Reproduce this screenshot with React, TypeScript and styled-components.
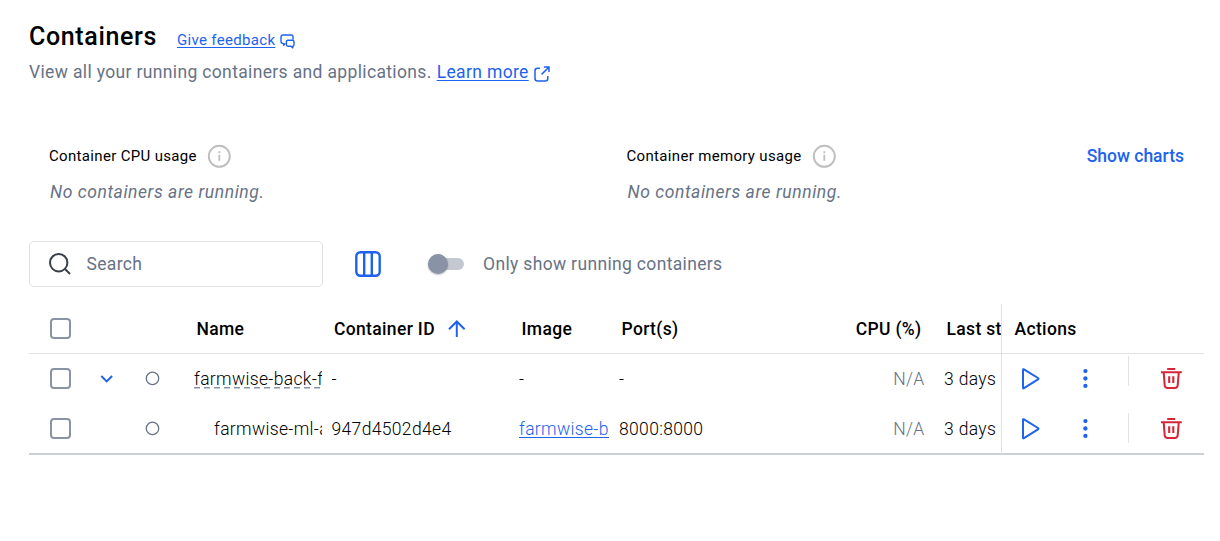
import React from "react";
import styled, { createGlobalStyle, css } from "styled-components";

const blue = "#1d63ed";
const slate = "#677285";
const steel = "#8993a5";
const line = "#e1e2e6";

const GlobalStyle = createGlobalStyle`
  * { box-sizing: border-box; }
  body { margin: 0; background: #fff; color: #000; font-family: Roboto, "Liberation Sans", sans-serif; font-size: 17.5px; }
  svg { display: block; flex: none; }
`;

const Page = styled.main`
  width: 1220px;
  height: 541px;
  padding: 18px 16px 0 29px;
  overflow: hidden;
  white-space: nowrap;
  letter-spacing: 0.34px;
`;

const TitleRow = styled.header`
  display: flex;
  align-items: center;
  height: 36px;
`;

const Title = styled.h1`
  margin: 0;
  width: 148px;
  padding-top: 1px;
  font-size: 25px;
  font-weight: 500;
  letter-spacing: 0.65px;
  line-height: 36px;
`;

const Link = styled.a<{ $small?: boolean }>`
  color: ${blue};
  text-decoration: underline;
  text-underline-offset: 2px;
  text-decoration-thickness: 1px;
  ${(p) => p.$small && css`
    font-size: 15px;
    line-height: 20px;
    margin: 7px 5px 0 0;
    letter-spacing: 0.32px;
  `}
`;

const FeedbackIcon = styled.svg`
  margin-top: 10px;
`;

const Subtitle = styled.p`
  display: flex;
  align-items: center;
  margin: 6px 0 0;
  height: 24px;
  color: ${slate};
  letter-spacing: 0.35px;
  gap: 5px;
`;

const ExternalIcon = styled.svg`
  margin-top: 3px;
`;

const Usage = styled.section`
  display: grid;
  grid-template-columns: 577.5px 1fr auto;
  padding: 0 20px;
  margin-top: 60px;
`;

const UsageLabel = styled.div`
  display: flex;
  align-items: center;
  gap: 10px;
  height: 24px;
  font-size: 15px;
  letter-spacing: 0.33px;
`;

const UsageText = styled.div`
  margin: 12px 0 0 1px;
  line-height: 24px;
  color: ${slate};
  font-style: italic;
  letter-spacing: 0.57px;
`;

const ChartsButton = styled.button`
  height: 24px;
  padding: 0;
  border: 0;
  background: none;
  color: ${blue};
  font: 500 17.5px/24px Roboto, sans-serif;
`;

const Toolbar = styled.div`
  display: flex;
  align-items: center;
  height: 46px;
  margin-top: 37px;
`;

const SearchBox = styled.div`
  display: flex;
  align-items: center;
  gap: 15.5px;
  width: 294px;
  height: 46px;
  padding-left: 19px;
  border: 1px solid ${line};
  border-radius: 5px;
  color: ${slate};
`;

const ColumnsButton = styled.div`
  margin-left: 32px;
`;

const Switch = styled.div`
  display: flex;
  align-items: center;
  width: 36px;
  height: 12px;
  margin: 0 19px 0 47px;
  border-radius: 6px;
  background: #c4c8d1;
`;

const Knob = styled.span`
  width: 20px;
  height: 20px;
  flex: none;
  border-radius: 50%;
  background: ${steel};
  box-shadow: 0 1px 2px rgba(0, 0, 0, 0.25);
`;

const SwitchLabel = styled.span`
  color: ${slate};
`;

const Table = styled.div`
  margin-top: 17px;
  border-bottom: 2px solid #cdcfd6;
`;

const Row = styled.div<{ $head?: boolean }>`
  display: grid;
  grid-template-columns: 57px 43px 65px 137.5px 187.5px 100px 236px 89px 57px 203px;
  align-items: center;
  height: 50px;
  padding-bottom: ${(p) => (p.$head ? 0 : 1)}px;
  border-bottom: ${(p) => (p.$head ? `1px solid ${line}` : "0")};
  font-weight: ${(p) => (p.$head ? 500 : 300)};
  &:last-child { height: 49px; padding-bottom: 0; }
`;

const Cell = styled.div<{ $indent?: number; $right?: number; $end?: boolean; $muted?: boolean }>`
  min-width: 0;
  overflow: hidden;
  line-height: 26px;
  margin-left: ${(p) => p.$indent ?? 0}px;
  margin-right: ${(p) => p.$right ?? 9.5}px;
  text-align: ${(p) => (p.$end ? "right" : "left")};
  color: ${(p) => (p.$muted ? slate : "inherit")};
`;

const Group = styled.span`
  display: block;
  padding-top: 2px;
  line-height: 19px;
  background: repeating-linear-gradient(90deg, ${steel} 0 6px, transparent 6px 10px) 0 18.5px / 100% 1.5px no-repeat;
`;

const HeadLabel = styled.span`
  display: flex;
  align-items: center;
  gap: 13.5px;
`;

const Check = styled.span`
  display: block;
  width: 21px;
  height: 21px;
  margin-left: 21px;
  border: 2px solid ${steel};
  border-radius: 4px;
`;

const ExpandIcon = styled.svg`
  margin-left: 13.5px;
`;

const StatusIcon = styled.svg`
  margin-left: 16px;
`;

const Actions = styled.div<{ $head?: boolean }>`
  display: flex;
  align-items: center;
  align-self: stretch;
  margin-bottom: ${(p) => (p.$head ? 0 : -1)}px;
  padding-left: ${(p) => (p.$head ? 12.5 : 19)}px;
  padding-bottom: ${(p) => (p.$head ? 0 : 1)}px;
  border-left: 1px solid ${line};
`;

const Divider = styled.span<{ $shift: number }>`
  width: 1px;
  height: 30px;
  margin: ${(p) => p.$shift}px 31px 0 40px;
  background: ${line};
`;

const DotsIcon = styled.svg`
  margin-left: 41px;
`;

const Info = () => (
  <svg width="24" height="24" viewBox="0 0 24 24" fill="none" stroke="#bfbfbf">
    <circle cx="12.3" cy="12.3" r="10.5" strokeWidth="2" />
    <path d="M12.3 10.8v6M12.3 7.3v2" strokeWidth="1.8" />
  </svg>
);

const Status = () => (
  <StatusIcon width="15" height="15" viewBox="0 0 15 15" fill="none" stroke={slate} strokeWidth="1.3">
    <circle cx="7.5" cy="7.4" r="6.2" />
  </StatusIcon>
);

const Play = () => (
  <svg width="20" height="24" viewBox="0 0 20 24" fill="none" stroke={blue} strokeWidth="2" strokeLinejoin="round">
    <path d="M2 2.9Q2 1.8 3 2.4L17 11Q18 11.7 17 12.4L3 21.2Q2 21.8 2 20.7Z" />
  </svg>
);

const Dots = () => (
  <DotsIcon width="6" height="22" viewBox="0 0 6 22" fill={blue}>
    <circle cx="3.4" cy="3.1" r="2.15" />
    <circle cx="3.4" cy="10.5" r="2.15" />
    <circle cx="3.4" cy="17.9" r="2.15" />
  </DotsIcon>
);

const Trash = () => (
  <svg width="23" height="23" viewBox="0 0 23 23" fill="none" stroke="#d52536" strokeWidth="2">
    <path d="M7.2 2h8M1 5.2h20.8M3.7 5.2l1 13.2Q5 21 7.6 21h7.2q2.6 0 2.9-2.6l1.1-13.2" />
    <path d="M9.2 9.3v6.8M13.3 9.3v6.8" strokeWidth="2.1" />
  </svg>
);

const RowActions = ({ shift }: { shift: number }) => (
  <Actions>
    <Play />
    <Dots />
    <Divider $shift={shift} />
    <Trash />
  </Actions>
);

export default function App() {
  return (
    <Page>
      <GlobalStyle />
      <TitleRow>
        <Title>Containers</Title>
        <Link $small>Give feedback</Link>
        <FeedbackIcon width="15" height="15" viewBox="0 0 15 15" fill="none" stroke={blue} strokeWidth="1.4" strokeLinejoin="round">
          <path d="M5.6 9.6H5L3.6 11.2V9.6Q1 9.4 1 7.4V3Q1 1 3 1h8q2 0 2 2v2.8" />
          <path d="M8 6.2h4.4q1.6 0 1.6 1.6v2.6q0 1.5-1.2 1.7v1.8L11 12.2H8q-1.6 0-1.6-1.6V7.8Q6.4 6.2 8 6.2Z" />
        </FeedbackIcon>
      </TitleRow>
      <Subtitle>
        <span>View all your running containers and applications.</span>
        <Link>Learn more</Link>
        <ExternalIcon width="16" height="16" viewBox="0 0 16 16" fill="none" stroke={blue} strokeWidth="1.5">
          <path d="M6 2.2H3.5Q1 2.2 1 4.7v7.8Q1 15 3.5 15h7.8q2.5 0 2.5-2.5V10" />
          <path d="M7.6 8.4L14.8 1.2M10 1h5v5" />
        </ExternalIcon>
      </Subtitle>

      <Usage>
        <div>
          <UsageLabel>Container CPU usage <Info /></UsageLabel>
          <UsageText>No containers are running.</UsageText>
        </div>
        <div>
          <UsageLabel>Container memory usage <Info /></UsageLabel>
          <UsageText>No containers are running.</UsageText>
        </div>
        <ChartsButton>Show charts</ChartsButton>
      </Usage>

      <Toolbar>
        <SearchBox>
          <svg width="22" height="22" viewBox="0 0 22 22" fill="none" stroke="#393f49" strokeWidth="2">
            <circle cx="9.7" cy="9.7" r="8.7" />
            <path d="M16 16l5 5" />
          </svg>
          Search
        </SearchBox>
        <ColumnsButton>
          <svg width="26" height="26" viewBox="0 0 26 26" fill="none" stroke={blue} strokeWidth="2.4">
            <rect x="1.3" y="1.3" width="23.4" height="23.4" rx="4" />
            <path d="M9.2 1v24M16.8 1v24" />
          </svg>
        </ColumnsButton>
        <Switch><Knob /></Switch>
        <SwitchLabel>Only show running containers</SwitchLabel>
      </Toolbar>

      <Table>
        <Row $head>
          <Check />
          <span />
          <span />
          <Cell $indent={2.5}>Name</Cell>
          <Cell $indent={2.5}>
            <HeadLabel>
              Container ID
              <svg width="18" height="18" viewBox="0 0 18 18" fill="none" stroke={blue} strokeWidth="2">
                <path d="M8.8 17V2M1 9.3L8.8 1.5l7.8 7.8" />
              </svg>
            </HeadLabel>
          </Cell>
          <Cell $indent={2.5}>Image</Cell>
          <Cell $indent={2.5}>Port(s)</Cell>
          <Cell $end $right={22.5}>CPU (%)</Cell>
          <Cell $indent={2.5} $right={0}>Last started</Cell>
          <Actions $head>Actions</Actions>
        </Row>
        <Row>
          <Check />
          <ExpandIcon width="14" height="10" viewBox="0 0 14 10" fill="none" stroke={blue} strokeWidth="2">
            <path d="M1.3 2l5.4 5.4L12.1 2" />
          </ExpandIcon>
          <Status />
          <Cell><Group>farmwise-back-fastapi</Group></Cell>
          <Cell>-</Cell>
          <Cell>-</Cell>
          <Cell>-</Cell>
          <Cell $end $muted $right={19.5}>N/A</Cell>
          <Cell $right={4}>3 days ago</Cell>
          <RowActions shift={-15} />
        </Row>
        <Row>
          <Check />
          <span />
          <Status />
          <Cell $indent={20}>farmwise-ml-api</Cell>
          <Cell>947d4502d4e4</Cell>
          <Cell $right={10.5}><Link>farmwise-backend</Link></Cell>
          <Cell>8000:8000</Cell>
          <Cell $end $muted $right={19.5}>N/A</Cell>
          <Cell $right={4}>3 days ago</Cell>
          <RowActions shift={-1} />
        </Row>
      </Table>
    </Page>
  );
}
